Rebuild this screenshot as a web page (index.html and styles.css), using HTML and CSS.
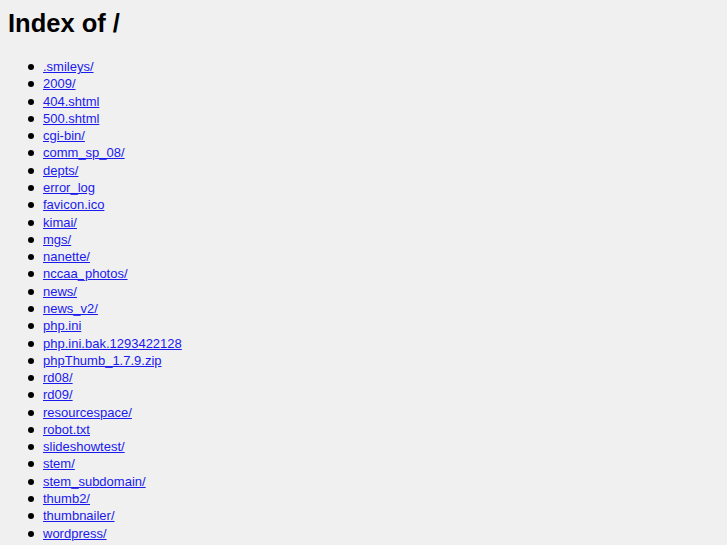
FILE: index.html
```html
<!DOCTYPE html>
<html>
<head>
<meta charset="utf-8">
<title>Index of /</title>
<link rel="stylesheet" href="styles.css">
</head>
<body>
<h1 class="title">Index of /</h1>
<ul class="listing">
<li><a href="#">.smileys/</a></li>
<li><a href="#">2009/</a></li>
<li><a href="#">404.shtml</a></li>
<li><a href="#">500.shtml</a></li>
<li><a href="#">cgi-bin/</a></li>
<li><a href="#">comm_sp_08/</a></li>
<li><a href="#">depts/</a></li>
<li><a href="#">error_log</a></li>
<li><a href="#">favicon.ico</a></li>
<li><a href="#">kimai/</a></li>
<li><a href="#">mgs/</a></li>
<li><a href="#">nanette/</a></li>
<li><a href="#">nccaa_photos/</a></li>
<li><a href="#">news/</a></li>
<li><a href="#">news_v2/</a></li>
<li><a href="#">php.ini</a></li>
<li><a href="#">php.ini.bak.1293422128</a></li>
<li><a href="#">phpThumb_1.7.9.zip</a></li>
<li><a href="#">rd08/</a></li>
<li><a href="#">rd09/</a></li>
<li><a href="#">resourcespace/</a></li>
<li><a href="#">robot.txt</a></li>
<li><a href="#">slideshowtest/</a></li>
<li><a href="#">stem/</a></li>
<li><a href="#">stem_subdomain/</a></li>
<li><a href="#">thumb2/</a></li>
<li><a href="#">thumbnailer/</a></li>
<li><a href="#">wordpress/</a></li>
</ul>
</body>
</html>
```
FILE: styles.css
```css
html {
  background: #f0f0f0;
}
body {
  margin: 8px;
  font-family: "Liberation Sans", Arial, sans-serif;
  font-size: 13px;
  color: #000;
}
.title {
  font-size: 25.5px;
  font-weight: bold;
  margin: 0;
  line-height: 30px;
}
.listing {
  margin: 20px 0 0 0;
  padding-left: 35px;
  line-height: 17.28px;
  list-style: none;
}
.listing li::before {
  content: "";
  display: inline-block;
  width: 6px;
  height: 6px;
  border-radius: 50%;
  background: #000;
  margin-left: -15px;
  margin-right: 9px;
  vertical-align: 1px;
}
.listing a {
  color: #1a1aee;
  text-decoration: underline;
}
```
